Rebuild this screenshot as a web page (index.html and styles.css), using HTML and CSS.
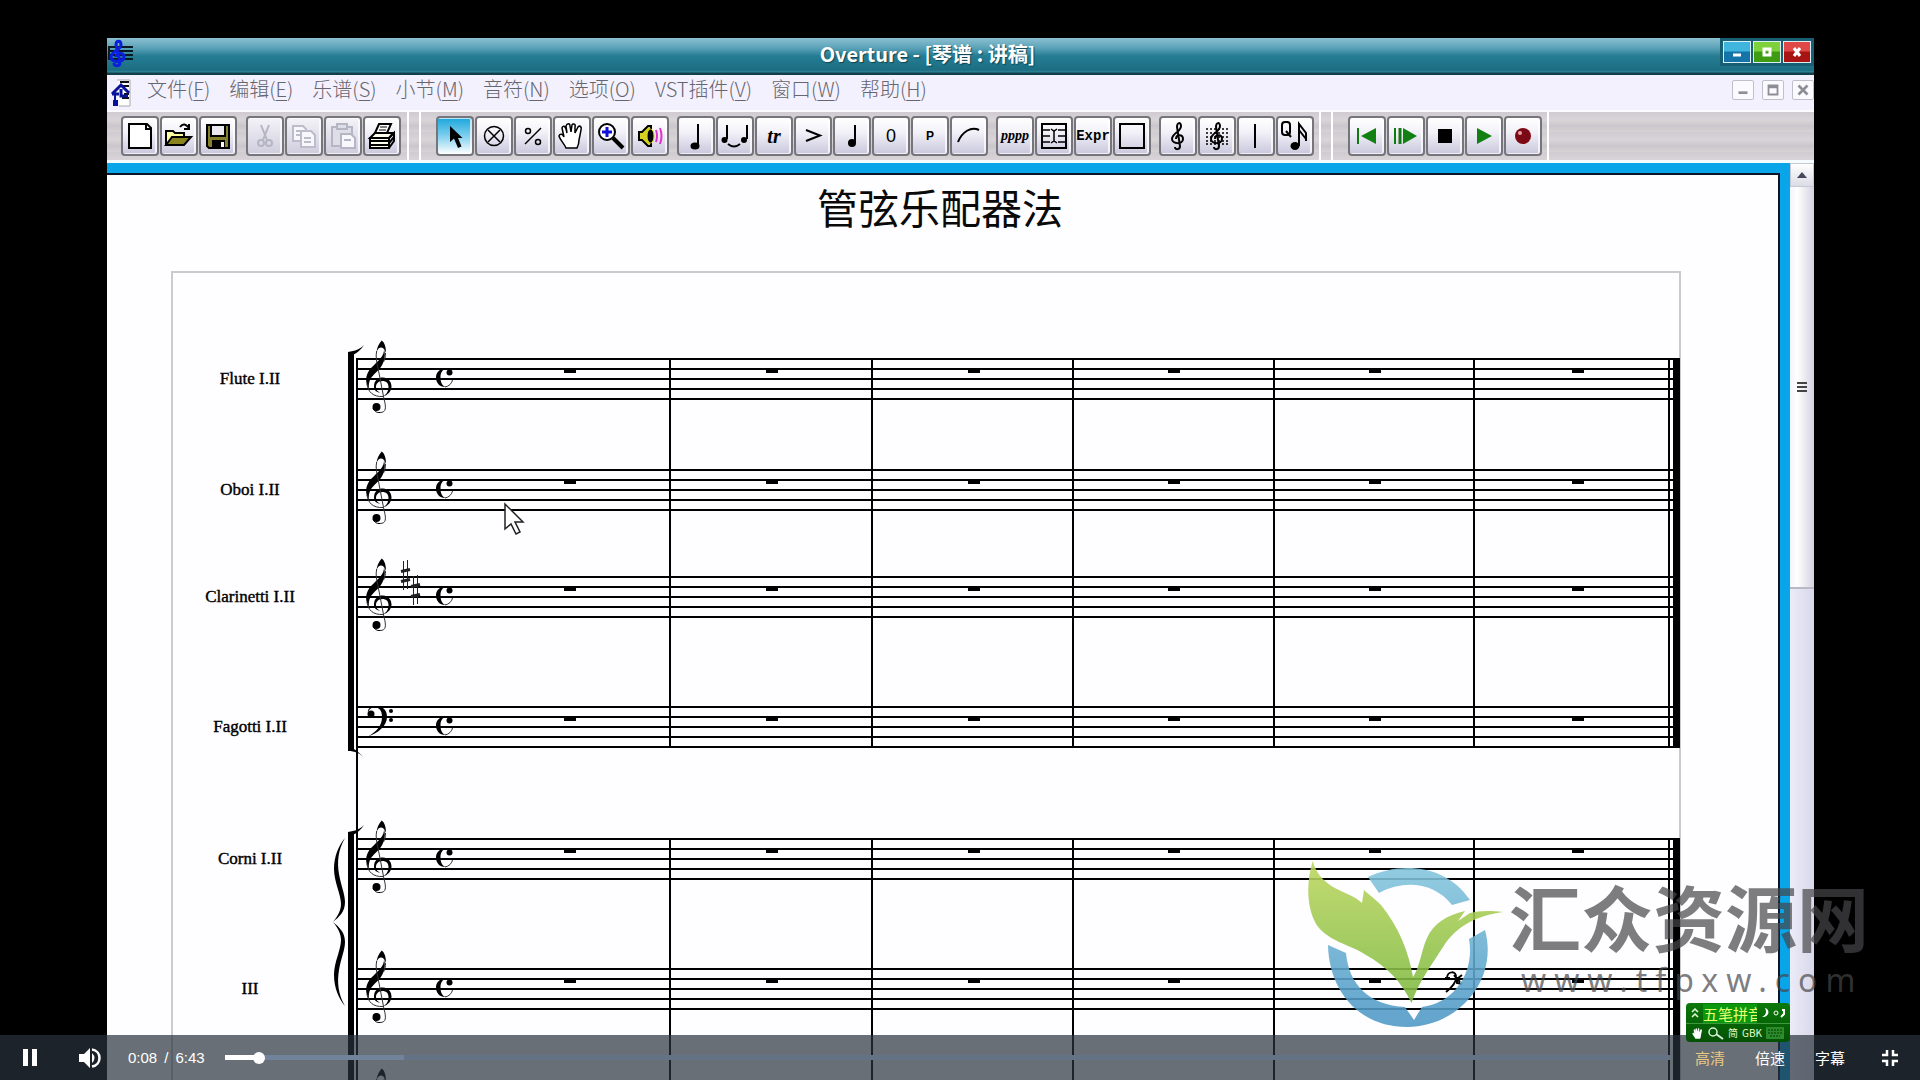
FILE: index.html
```
<!DOCTYPE html>
<html lang="zh-CN">
<head>
    <meta charset="UTF-8">
    <meta name="viewport" content="width=device-width, initial-scale=1.0">
    <title>Overture - [琴谱 : 讲稿]</title>
    <link rel="stylesheet" href="styles.css">
</head>
<body>
    <!-- shared shapes -->
    <svg class="defs" width="0" height="0" aria-hidden="true">
        <defs>
            <g id="treble">
                <path d="M27 -9C29.500 0 26 8 20 13.500C14 19 11 23 12 31C8 25 7.500 17 14.500 9.500C21 3 27.500 -2 27 -9Z"/>
                <path d="M24.700 -17.500C21.500 -14 20 -10 19.500 -6C22 -12 26.500 -12 29 -5C29 -12 27 -16 24.700 -17.500Z"/>
                <path d="M17 29C17 22 21 19.500 26 19.500C31 19.500 34.500 23.500 34.500 28.500C34.500 33 31 37 26 38.500C30 36 31.500 33 31.500 29C31.500 25 29 23 25.500 23C21 23 19 26 19 29C19 32 21 34 23 34.500C19.500 34.500 17 32 17 29Z"/>
                <path d="M28.500 -5C28.500 -1 28 1 26.500 4M19.700 -7C18.500 -2 19.500 4 21 10L27 41C29.500 50 29 54.500 23 54.500M10 26C11 34 16 39 26 38.500" fill="none" stroke="#333"/>
                <circle cx="19.500" cy="49" r="4"/>
                <path d="M16 50C17 53 20 55 23 54.500" fill="none" stroke="#000"/>
            </g>
            <g id="bass">
                <circle cx="14" cy="8" r="3.500"/>
                <path d="M11 7C10 2 15 0 19 0C26 0 30 4 30 11C30 20 21 27 11 30.500C19 26 25 20 25 11C25 4 22 1.500 18 1.500C14 1.500 12 3 11 7Z"/>
                <circle cx="34" cy="5" r="2"/><circle cx="34" cy="14" r="2"/>
            </g>
            <g id="common">
                <path d="M90 10.500C82 10 79 15 79 19.500C79 25 83 29.500 89 29C85 28 83.500 24 83.500 19.500C83.500 15 85 11.500 90 10.500Z"/>
                <path d="M88 29C92 28.500 95 25 95.500 22" fill="none" stroke="#333"/>
                <circle cx="92.500" cy="14.500" r="3"/>
            </g>
            <g id="sharp" stroke="#222">
                <path d="M2.500 0V29M6.500 -1V28" stroke-width="1"/>
                <path d="M0 10.500L9 8.500M0 20.500L9 18.500" stroke-width="3"/>
            </g>
            <g id="gclef" fill="none" stroke="#000" stroke-width="2">
                <path d="M12 26C12 29 17 29 17 25L14 6C14 1 18 1 18 5C18 11 9 12 9 18C9 23 20 24 20 18C20 13 13 13 13 18"/>
            </g>
            <path id="hand" d="M9 27C7 22 3 19 2 15C3 12 6 13 7 16L5 7C6 4 8 5 9 8L10 12L9 5C10 2 13 2 13 5L14 11L15 4C16 2 19 3 18 6L18 12L21 6C23 4 25 6 24 9L22 19C22 23 21 25 20 27Z"/>
        </defs>
    </svg>

    <main class="window">
        <header class="titlebar">
            <svg class="app-icon" viewBox="0 0 28 28" width="28" height="28">
                <path d="M1 8H26M1 12H26M1 16H26M1 20H26M2 7V21" stroke="#0a1a22" stroke-width="2"/>
                <path d="M7 24C7 28 13 28 13 23L9 6C9 1 14 1 14 6C14 11 4 12 4 18C4 24 17 24 17 18C17 13 9 13 9 18" fill="none" stroke="#0a1ee0" stroke-width="3"/>
            </svg>
            <h1 class="caption">Overture - [琴谱 : 讲稿]</h1>
            <div class="caption-buttons">
                <button class="cap min" aria-label="最小化"><svg viewBox="0 0 28 22" width="28" height="22"><path d="M10 14H18" stroke="#fff" stroke-width="3"/></svg></button>
                <button class="cap max" aria-label="最大化"><svg viewBox="0 0 28 22" width="28" height="22"><rect x="11" y="8" width="6" height="6" fill="none" stroke="#fff" stroke-width="3"/></svg></button>
                <button class="cap close" aria-label="关闭"><svg viewBox="0 0 28 22" width="28" height="22"><path d="M11 7L17 15M17 7L11 15" stroke="#fff" stroke-width="3"/></svg></button>
            </div>
        </header>

        <nav class="menubar">
            <svg class="doc-icon" viewBox="0 0 22 28" width="22" height="28">
                <path d="M7 1H20V27H9" fill="#fff" stroke="#aaa"/>
                <path d="M10 3H19M12 7H19M14 15H19M12 19H19" stroke="#111" stroke-width="2"/>
                <path d="M2 15L11 6L19 14M2 15H9M11 10V17H18" fill="none" stroke="#0a1299" stroke-width="3"/>
                <path d="M5 16V22" stroke="#0a1299" stroke-width="2"/>
                <rect x="3" y="21" width="5" height="6" fill="#0a1299"/>
            </svg>
            <button class="menu">文件(<u>F</u>)</button>
            <button class="menu">编辑(<u>E</u>)</button>
            <button class="menu">乐谱(<u>S</u>)</button>
            <button class="menu">小节(<u>M</u>)</button>
            <button class="menu">音符(<u>N</u>)</button>
            <button class="menu">选项(<u>O</u>)</button>
            <button class="menu">VST插件(<u>V</u>)</button>
            <button class="menu">窗口(<u>W</u>)</button>
            <button class="menu">帮助(<u>H</u>)</button>
            <div class="mdi-buttons">
                <button class="mdi" aria-label="最小化文档"><svg viewBox="0 0 20 20" width="20" height="18"><path d="M5 13H15" stroke="#8d8d96" stroke-width="3"/></svg></button>
                <button class="mdi" aria-label="还原文档"><svg viewBox="0 0 20 20" width="20" height="18"><path d="M5 5H15V15H5Z M5 7H15" fill="none" stroke="#8d8d96" stroke-width="2"/></svg></button>
                <button class="mdi" aria-label="关闭文档"><svg viewBox="0 0 20 20" width="20" height="18"><path d="M5 5L15 15M15 5L5 15" stroke="#8d8d96" stroke-width="3"/></svg></button>
            </div>
        </nav>

        <div class="toolbar">
            <div class="band band-file">
                <div class="group">
                    <button class="tool" aria-label="新建"><svg class="icon" viewBox="0 0 30 30"><path d="M4 3H22L26 7V27H4Z" fill="#fff" stroke="#000" stroke-width="2"/><path d="M21 3V8H26" fill="none" stroke="#000" stroke-width="2"/></svg></button>
                    <button class="tool" aria-label="打开"><svg class="icon" viewBox="0 0 30 30"><path d="M2 24V10H9L11 12H20V16" fill="#ffffa0" stroke="#000" stroke-width="2"/><path d="M2 24L8 16H27L20 24Z" fill="#8a8420" stroke="#000" stroke-width="2"/><path d="M16 6C19 2 22 3 25 7M25 3V8H20" fill="none" stroke="#000" stroke-width="2"/></svg></button>
                    <button class="tool" aria-label="保存"><svg class="icon" viewBox="0 0 30 30"><path d="M4 4H26V27H6L4 25Z" fill="#84802c" stroke="#000" stroke-width="2"/><rect x="8" y="4" width="14" height="11" fill="#e9e9ef" stroke="#000" stroke-width="2"/><rect x="9" y="19" width="13" height="8"/><rect x="18" y="21" width="3" height="5" fill="#fff"/></svg></button>
                </div>
                <div class="group">
                    <button class="tool off" aria-label="剪切" disabled><svg class="icon" viewBox="0 0 30 30" fill="none" stroke="#b5b5c4" stroke-width="2"><path d="M11 4L17 19M19 4L13 19"/><circle cx="11" cy="22" r="3"/><circle cx="19" cy="22" r="3"/></svg></button>
                    <button class="tool off" aria-label="复制" disabled><svg class="icon" viewBox="0 0 30 30" fill="#f8f8fc" stroke="#bcbccb" stroke-width="2"><path d="M4 5H14L17 8V20H4ZM7 10H13M7 14H13"/><path d="M12 10H22L26 14V26H12ZM15 17H22M15 21H22"/></svg></button>
                    <button class="tool off" aria-label="粘贴" disabled><svg class="icon" viewBox="0 0 30 30" fill="#dedee8" stroke="#b5b5c4" stroke-width="2"><path d="M4 6H24V25H4Z"/><path d="M9 3H19V8H9Z"/><path d="M13 13H23L27 17V27H13ZM16 19H23" fill="#f8f8fc"/></svg></button>
                    <button class="tool" aria-label="打印"><svg class="icon" viewBox="0 0 30 30"><path d="M8 12L12 3H24L20 12Z" fill="#fff" stroke="#000" stroke-width="2"/><path d="M13 6H20M12 9H19" stroke="#000"/><path d="M3 17L8 12H26L22 17ZM3 17H22V27H3Z" fill="#fffff0" stroke="#000" stroke-width="2"/><path d="M22 17L27 12V20L22 27M3 20H22M3 24H22M22 22L27 16" fill="none" stroke="#000" stroke-width="2"/></svg></button>
                </div>
            </div>
            <div class="band band-edit">
                <div class="group">
                    <button class="tool active" aria-label="选择"><svg class="icon" viewBox="0 0 30 30"><path d="M10 5V21L14 17.500L18 27L21.500 25.500L18 17H22.500Z"/></svg></button>
                    <button class="tool" aria-label="橡皮"><svg class="icon" viewBox="0 0 30 30" fill="none" stroke="#000" stroke-width="1.500"><circle cx="15" cy="15" r="9.500"/><path d="M9 9L21 21M21 9L9 21"/></svg></button>
                    <button class="tool" aria-label="重复小节"><svg class="icon" viewBox="0 0 30 30" fill="none" stroke="#000" stroke-width="1.500"><circle cx="10" cy="10" r="2.500"/><circle cx="20" cy="21" r="2.500"/><path d="M23 7L7 23"/></svg></button>
                    <button class="tool" aria-label="抓手"><svg class="icon" viewBox="0 0 30 30"><use href="#hand" fill="#fff" stroke="#000" stroke-width="1.500"/></svg></button>
                    <button class="tool" aria-label="放大"><svg class="icon" viewBox="0 0 30 30"><path d="M17 17L27 27" stroke="#000" stroke-width="4"/><circle cx="11" cy="11" r="8" fill="#fff" stroke="#000" stroke-width="2"/><path d="M11 6V16M6 11H16" stroke="#1010d8" stroke-width="3"/></svg></button>
                    <button class="tool" aria-label="播放声音"><svg class="icon" viewBox="0 0 30 30"><path d="M4 11H7L13 5H16V25H13L7 19H4Z" fill="#d8d020" stroke="#000" stroke-width="2"/><ellipse cx="15.500" cy="15" rx="3.500" ry="7" stroke="#d8d020"/><path d="M21 9Q23 15 21 21M25 7Q28 15 25 23" fill="none" stroke="#e030d0" stroke-width="2"/></svg></button>
                </div>
                <div class="group">
                    <button class="tool" aria-label="音符"><svg class="icon" viewBox="0 0 30 30"><path d="M17 3V24" stroke="#000" stroke-width="2"/><ellipse cx="14" cy="25" rx="4.500" ry="3.500"/></svg></button>
                    <button class="tool" aria-label="连音"><svg class="icon" viewBox="0 0 30 30"><path d="M7 4V18M27 4V18" stroke="#000" stroke-width="2"/><circle cx="4.500" cy="19" r="3"/><circle cx="24" cy="19" r="3"/><path d="M8 23Q14 28 20 23" fill="none" stroke="#000" stroke-width="2"/></svg></button>
                    <button class="tool glyph-tr" aria-label="颤音">tr</button>
                    <button class="tool" aria-label="重音"><svg class="icon" viewBox="0 0 30 30"><path d="M8 9L22 14.500L8 20" fill="none" stroke="#000" stroke-width="2"/></svg></button>
                    <button class="tool" aria-label="符头"><svg class="icon" viewBox="0 0 30 30"><path d="M18 4V22" stroke="#000" stroke-width="2"/><circle cx="15" cy="22" r="4"/></svg></button>
                    <button class="tool glyph-o" aria-label="全音符">0</button>
                    <button class="tool glyph-p" aria-label="踏板">P</button>
                    <button class="tool" aria-label="连线"><svg class="icon" viewBox="0 0 30 30"><path d="M4 21C8 11 17 5 25 9" fill="none" stroke="#000" stroke-width="2"/></svg></button>
                </div>
                <div class="group">
                    <button class="tool glyph-pppp" aria-label="力度">pppp</button>
                    <button class="tool" aria-label="谱表"><svg class="icon" viewBox="0 0 30 30" fill="none" stroke="#000" stroke-width="2"><path d="M3 3H27V27H3Z"/><path d="M3 9H11M19 9H27M3 15H11M19 15H27M3 21H11M19 21H27M12 8L15 10L18 8M15 10V20M12 22L15 20L18 22" stroke-width="1.500"/></svg></button>
                    <button class="tool glyph-expr" aria-label="表情">Expr</button>
                    <button class="tool" aria-label="框"><svg class="icon" viewBox="0 0 30 30"><path d="M3 3H27V27H3Z" fill="none" stroke="#000" stroke-width="2"/></svg></button>
                </div>
                <div class="group">
                    <button class="tool" aria-label="谱号"><svg class="icon" viewBox="0 0 30 30"><use href="#gclef"/></svg></button>
                    <button class="tool" aria-label="调号"><svg class="icon" viewBox="0 0 30 30"><path d="M4 8H27M4 12H27M4 16H27M4 20H27M4 23H27" stroke="#000" stroke-dasharray="2 2" stroke-width="1.500"/><use href="#gclef"/></svg></button>
                    <button class="tool" aria-label="小节线"><svg class="icon" viewBox="0 0 30 30"><path d="M14 3V27" stroke="#000" stroke-width="2"/></svg></button>
                    <button class="tool" aria-label="量化"><svg class="icon" viewBox="0 0 30 30"><rect x="2" y="1" width="8" height="13" rx="3" fill="none" stroke="#000" stroke-width="2"/><path d="M6 10L11 16M19 25V3L26 12V20M19 9L26 18" fill="none" stroke="#000" stroke-width="2"/><ellipse cx="15" cy="25" rx="4.500" ry="4"/></svg></button>
                </div>
            </div>
            <div class="band band-play">
                <div class="group">
                    <button class="tool" aria-label="回到开头"><svg class="icon" viewBox="0 0 30 30"><path d="M6 7V23" stroke="#107a10" stroke-width="2"/><path d="M24 7V23L9 15Z" fill="#128012"/></svg></button>
                    <button class="tool" aria-label="从头播放"><svg class="icon" viewBox="0 0 30 30"><path d="M4 7V23" stroke="#107a10" stroke-width="2"/><path d="M9 7V23" stroke="#107a10" stroke-width="3"/><path d="M12 7V23L26 15Z" fill="#128012"/></svg></button>
                    <button class="tool" aria-label="停止"><svg class="icon" viewBox="0 0 30 30"><rect x="8" y="8" width="14" height="14"/></svg></button>
                    <button class="tool" aria-label="播放"><svg class="icon" viewBox="0 0 30 30"><path d="M8 7V23L23 15Z" fill="#128012"/></svg></button>
                    <button class="tool" aria-label="录音"><svg class="icon" viewBox="0 0 30 30"><circle cx="15" cy="15" r="8" fill="#7c0a14"/><circle cx="12" cy="12" r="2" fill="#e8a0a8"/></svg></button>
                </div>
            </div>
        </div>

        <div class="workspace">
            <article class="page">
                <h2 class="page-title">管弦乐配器法</h2>
                <div class="frame">
                    <section class="system woodwinds">
                        <div class="bracket"></div>
                        <svg class="hook hook-top" viewBox="0 0 16 10" width="16" height="10"><path d="M0 7C7 6 12 4 16 0C13 5 8 9 4 10H0Z"/></svg>
                        <svg class="hook hook-bottom" viewBox="0 0 16 10" width="16" height="10"><path d="M0 3C7 3 12 5 16 10C13 6 8 2 4 0H0Z"/></svg>
                        <div class="part part-1">
                            <span class="name">Flute I.II</span>
                            <div class="staff measures">
                                <div class="first"><svg class="signature" viewBox="0 0 112 42"><use href="#treble"/><use href="#common"/></svg><i class="rest"></i></div>
                                <i class="rest"></i><i class="rest"></i><i class="rest"></i><i class="rest"></i><i class="rest"></i>
                            </div>
                        </div>
                        <div class="part part-2">
                            <span class="name">Oboi I.II</span>
                            <div class="staff measures">
                                <div class="first"><svg class="signature" viewBox="0 0 112 42"><use href="#treble"/><use href="#common"/></svg><i class="rest"></i></div>
                                <i class="rest"></i><i class="rest"></i><i class="rest"></i><i class="rest"></i><i class="rest"></i>
                            </div>
                        </div>
                        <div class="part part-3">
                            <span class="name">Clarinetti I.II</span>
                            <div class="staff measures">
                                <div class="first"><svg class="signature" viewBox="0 0 112 42"><use href="#treble"/><use href="#sharp" x="44" y="-15"/><use href="#sharp" x="54" y="0"/><use href="#common"/></svg><i class="rest"></i></div>
                                <i class="rest"></i><i class="rest"></i><i class="rest"></i><i class="rest"></i><i class="rest"></i>
                            </div>
                        </div>
                        <div class="part">
                            <span class="name">Fagotti I.II</span>
                            <div class="staff measures">
                                <div class="first"><svg class="signature" viewBox="0 0 112 42"><use href="#bass"/><use href="#common"/></svg><i class="rest"></i></div>
                                <i class="rest"></i><i class="rest"></i><i class="rest"></i><i class="rest"></i><i class="rest"></i>
                            </div>
                        </div>
                        <div class="barlines measures"><i></i><i></i><i></i><i></i><i></i><i class="final"></i></div>
                        <svg class="pointer" viewBox="0 0 22 34" width="22" height="34"><path d="M2 2V27L8 22L13 32L17 30L12 20H20Z" fill="#fff" stroke="#222" stroke-width="1.500"/></svg>
                    </section>

                    <section class="system brass">
                        <div class="bracket"></div>
                        <svg class="hook hook-top" viewBox="0 0 16 10" width="16" height="10"><path d="M0 7C7 6 12 4 16 0C13 5 8 9 4 10H0Z"/></svg>
                        <svg class="brace" viewBox="0 0 14 168" width="14" height="168"><path d="M12 0C5 12 4 24 6 36C8 48 12 56 12 64C12 74 6 79 0 84C6 89 12 94 12 104C12 112 8 120 6 132C4 144 5 156 12 168C6 161 1 150 1 137C1 124 8 112 8 102C8 96 5 90 0 84C5 78 8 72 8 66C8 56 1 44 1 31C1 18 6 7 12 0Z"/></svg>
                        <div class="part part-4">
                            <span class="name">Corni I.II</span>
                            <div class="staff measures">
                                <div class="first"><svg class="signature" viewBox="0 0 112 42"><use href="#treble"/><use href="#common"/></svg><i class="rest"></i></div>
                                <i class="rest"></i><i class="rest"></i><i class="rest"></i><i class="rest"></i><i class="rest"></i>
                            </div>
                        </div>
                        <div class="part part-5">
                            <span class="name">III</span>
                            <div class="staff measures">
                                <div class="first"><svg class="signature" viewBox="0 0 112 42"><use href="#treble"/><use href="#common"/></svg><i class="rest"></i></div>
                                <i class="rest"></i><i class="rest"></i><i class="rest"></i><i class="rest"></i><i class="rest"></i>
                            </div>
                        </div>
                        <div class="part">
                            <span class="name"></span>
                            <div class="staff measures">
                                <div class="first"><svg class="signature" viewBox="0 0 112 42"><use href="#treble"/><use href="#common"/></svg><i class="rest"></i></div>
                            </div>
                        </div>
                        <div class="barlines measures"><i></i><i></i><i></i><i></i><i></i><i class="final"></i></div>
                        <svg class="clef-cursor" viewBox="0 0 20 24" width="20" height="24"><path d="M1 8H6M3 8C3 1 13 0 12 8C12 13 7 18 2 22M10 5L16 12M18 5L13 9V13L18 14" fill="none" stroke="#000" stroke-width="2"/></svg>
                    </section>
                </div>
            </article>
            <div class="scrollbar">
                <button class="scroll-up" aria-label="向上滚动"><svg viewBox="0 0 10 6" width="10" height="6"><path d="M0 6L5 0L10 6Z" fill="#444a5c"/></svg></button>
                <div class="scroll-thumb"><svg viewBox="0 0 10 10" width="10" height="10"><path d="M0 1H10M0 5H10M0 9H10" stroke="#444" stroke-width="2"/></svg></div>
            </div>
        </div>
    </main>

    <aside class="watermark">
        <svg viewBox="0 0 197 167" width="197" height="167">
            <defs>
                <linearGradient id="leaf" x1="0" y1="0" x2="0" y2="1"><stop offset="0" stop-color="#bcd75e"/><stop offset="1" stop-color="#7cb93f"/></linearGradient>
                <linearGradient id="ring" gradientUnits="userSpaceOnUse" x1="0" y1="0" x2="0" y2="166"><stop offset="0" stop-color="#86c8de"/><stop offset="1" stop-color="#4d97c6"/></linearGradient>
            </defs>
            <g opacity="0.880">
                <path d="M61 16C92 1 138 2 163 39L145 44C128 22 98 18 72 32Z" fill="url(#ring)"/>
                <path d="M21 84C22 130 52 166 100 166C150 166 192 120 178 69L162 78C168 112 147 142 115 146L107 159L98 146C62 144 42 124 39 92Z" fill="url(#ring)"/>
                <path d="M5.700 0C-1 22 0 45 8 61C18 80 45 84 59 94C80 106 94 120 104.500 142C112 120 126 102 136 86C150 64 170 55 196 51C182 49 170 50 163 52L151 60L158 50C140 54 126 63 120 77C114 90 113 106 106 116C102 92 92 66 74 44C66 36 60 32 57 29L55 42C44 30 14 30 5.700 0Z" fill="url(#leaf)"/>
            </g>
        </svg>
        <div class="watermark-text">
            <strong>汇众资源网</strong>
            <span>www.tfpxw.com</span>
        </div>
    </aside>

    <div class="ime">
        <div class="ime-row">
            <svg viewBox="0 0 8 12" width="8" height="12" fill="none" stroke="#e8ffe0" stroke-width="1.500"><path d="M1 5L4 2L7 5M1 10L4 7L7 10"/></svg>
            <span class="ime-name">五笔拼音</span>
            <svg viewBox="0 0 8 10" width="8" height="10"><path d="M4 0C9 1 9 9 1 9C5 7 6 4 4 0Z" fill="#fff"/></svg>
            <svg viewBox="0 0 12 10" width="12" height="10"><circle cx="3" cy="5" r="2" fill="none" stroke="#fff"/><path d="M9 2H11V6L8 9" fill="none" stroke="#fff" stroke-width="2"/></svg>
        </div>
        <div class="ime-row">
            <svg viewBox="0 0 28 30" width="13" height="13"><use href="#hand" fill="#fff"/></svg>
            <svg viewBox="0 0 16 13" width="16" height="13"><circle cx="5" cy="5" r="4" fill="none" stroke="#d8f0d8" stroke-width="1.500"/><path d="M8 7L15 12" stroke="#d8f0d8" stroke-width="2"/></svg>
            <span class="ime-small">简</span>
            <span class="ime-small">GBK</span>
            <svg viewBox="0 0 18 12" width="18" height="12"><rect x="0" y="0" width="18" height="12" fill="#2d8a2d"/><path d="M2 3H16M2 6H16M4 9H14" stroke="#0b5a0b" stroke-dasharray="2 1" stroke-width="1.500"/></svg>
        </div>
    </div>

    <footer class="player">
        <button class="ctl pause" aria-label="暂停"><svg viewBox="0 0 14 17" width="14" height="17"><path d="M0 0H5V17H0ZM9 0H14V17H9Z" fill="#fff"/></svg></button>
        <button class="ctl volume" aria-label="音量"><svg viewBox="0 0 22 20" width="22" height="20"><path d="M0 6H5L11 0V20L5 14H0Z" fill="#fff"/><path d="M13 5Q18 10 13 15Z" fill="#fff"/><path d="M13 1.500C23 3 23 17 13 18.500" fill="none" stroke="#fff" stroke-width="2.500"/></svg></button>
        <div class="time"><span>0:08</span><span>/</span><span>6:43</span></div>
        <input class="progress" type="range" min="0" max="403" value="8" aria-label="播放进度">
        <div class="options">
            <button class="ctl quality">高清</button>
            <button class="ctl">倍速</button>
            <button class="ctl">字幕</button>
        </div>
        <button class="ctl" aria-label="退出全屏"><svg viewBox="0 0 16 16" width="16" height="16"><path d="M0 5H5V0M11 0V5H16M16 11H11V16M5 16V11H0" fill="none" stroke="#fff" stroke-width="2.500"/></svg></button>
    </footer>
</body>
</html>
```
FILE: styles.css
```
* {
    box-sizing: border-box;
}
body {
    margin: 0;
    height: 100vh;
    overflow: hidden;
    background: #000;
    font-family: "Noto Sans CJK SC", "Noto Sans", sans-serif;
}
button {
    margin: 0;
    padding: 0;
    border: 0;
    background: none;
    font: inherit;
    color: inherit;
    cursor: pointer;
}
svg {
    display: block;
    flex: none;
}
.defs {
    position: absolute;
}

/* application window */
.window {
    display: flex;
    flex-direction: column;
    height: 100vh;
    padding: 38px 106px 0 107px;
}
.titlebar {
    display: flex;
    align-items: flex-start;
    height: 37px;
    background: linear-gradient(#8cc0d2 0, #5aa2b8 10px, #257d93 18px, #1b6e82 32px, #2f8597 34px, #123f4c 35px);
}
.app-icon {
    margin-top: 1px;
}
.caption {
    flex: 1;
    margin: 0;
    text-align: center;
    font-size: 20px;
    line-height: 32px;
    font-weight: bold;
    color: #fff;
    text-shadow: 1px 1px 1px #0e4452;
}
.caption-buttons {
    display: flex;
    gap: 2px;
    padding: 3px;
    background: #185f74;
}
.cap {
    border: 1px solid #d7eef5;
    overflow: hidden;
}
.cap svg {
    margin: -1px;
}
.cap.min {
    background: linear-gradient(#3fb4dc 45%, #1474a8 50%);
}
.cap.max {
    background: linear-gradient(#7fd13c 45%, #3f9c12 50%);
}
.cap.close {
    background: linear-gradient(#e04848 45%, #a81414 50%);
}
.menubar {
    display: flex;
    align-items: center;
    gap: 19px;
    height: 35px;
    background: #f4f1fe;
    color: #666670;
    font-size: 20px;
    line-height: 28px;
    font-weight: 300;
}
.doc-icon {
    margin: 0 -4px 0 3px;
}
.menu {
    padding-bottom: 8px;
    white-space: nowrap;
}
.menu u {
    text-decoration-thickness: 1px;
    text-underline-offset: 3px;
}
.mdi-buttons {
    display: flex;
    gap: 8px;
    margin-left: auto;
    padding-bottom: 6px;
}
.mdi {
    border: 1px solid #c0c0cc;
    border-radius: 2px;
    background: #fbfbff;
}

/* toolbar */
.toolbar {
    display: flex;
    height: 53px;
    border-top: 2px solid #fcfbff;
    border-bottom: 3px solid #f6fbff;
    background: repeating-linear-gradient(#cfcbd0 0, #d8d4d8 8px, #cac6cb 14px, #d6d2d6 20px);
}
.band {
    display: flex;
    align-items: center;
    border-right: 2px solid #fff;
}
.band-file {
    gap: 9px;
    padding: 0 6px 0 14px;
}
.band-edit,
.band-play {
    gap: 8px;
    padding: 0 5px 0 15px;
    margin-left: 10px;
    border-left: 2px solid #fff;
}
.group {
    display: flex;
    gap: 1px;
}
.tool {
    display: flex;
    align-items: center;
    justify-content: center;
    width: 38px;
    height: 40px;
    border: 2px solid #77757c;
    border-radius: 4px;
    background: linear-gradient(#ffffff, #f2f1f8 40%, #c9c7dc);
    box-shadow: inset -1px 0 0 1px #ffffffb0;
    color: #000;
}
.tool.off {
    background: linear-gradient(#f4f3f8, #cfcddd);
}
.tool.active {
    background: linear-gradient(#1ba6dc, #7fd0ee 50%, #fff);
}
.icon {
    width: 30px;
    height: 30px;
}
.glyph-tr {
    font: italic bold 20px "Liberation Serif", serif;
}
.glyph-o {
    font: 18px "Liberation Sans", sans-serif;
}
.glyph-p {
    font: bold 12px "Liberation Sans", sans-serif;
}
.glyph-pppp {
    font: italic bold 14px "Liberation Serif", serif;
}
.glyph-expr {
    font: 14px "Liberation Mono", monospace;
    font-weight: bold;
}

/* document */
.workspace {
    display: flex;
    flex: 1;
    min-height: 0;
    background: #08a5e8;
}
.page {
    flex: 1;
    display: flex;
    flex-direction: column;
    margin: 10px 10px 0 0;
    border: solid #0c1426;
    border-width: 2px 2px 0 0;
    background: #fefdff;
    overflow: hidden;
}
.page-title {
    margin: 0;
    padding: 0 5px 34px 0;
    text-align: center;
    font-size: 41px;
    line-height: 62px;
    font-weight: 400;
    color: #0a0a0a;
}
.frame {
    position: relative;
    flex: none;
    margin: 0 97px 0 64px;
    padding-top: 85px;
    border: 2px solid #cbcacd;
}
.frame::before {
    content: "";
    position: absolute;
    top: 85px;
    bottom: 0;
    left: 183px;
    width: 2px;
    background: #000;
}
.system {
    position: relative;
    margin-right: -1px;
}
.woodwinds {
    margin-bottom: 90px;
}
.part {
    display: grid;
    grid-template-columns: 154px 1fr;
    column-gap: 30px;
    align-items: center;
}
.part-1 {
    margin-bottom: 69px;
}
.part-2 {
    margin-bottom: 65px;
}
.part-3,
.part-4 {
    margin-bottom: 88px;
}
.part-5 {
    margin-bottom: 76px;
}
.name {
    text-align: center;
    font-family: "Liberation Serif", serif;
    font-size: 17px;
    line-height: 20px;
    color: #000;
    -webkit-text-stroke: 0.4px #000;
}
.measures {
    display: grid;
    grid-template-columns: 314fr 203fr 201fr 201fr 201fr 205fr;
}
.staff {
    height: 42px;
    background: repeating-linear-gradient(#000 0 2px, transparent 2px 10px);
}
.first {
    display: flex;
}
.signature {
    width: 112px;
    height: 42px;
    overflow: visible;
}
.rest {
    width: 12px;
    height: 4px;
    margin: 11px auto 0;
    background: #000;
}
.barlines {
    position: absolute;
    top: 0;
    bottom: 0;
    left: 184px;
    right: 0;
}
.barlines i {
    border-right: 2px solid #000;
}
.barlines .final {
    border-right-width: 7px;
    background: linear-gradient(#000, #000) right 3px top 0 / 2px 100% no-repeat;
}
.bracket {
    position: absolute;
    top: -6px;
    bottom: -3px;
    left: 175px;
    width: 6px;
    background: #000;
}
.hook {
    position: absolute;
    left: 175px;
}
.hook-top {
    top: -13px;
}
.hook-bottom {
    bottom: -10px;
}
.brace {
    position: absolute;
    top: 0;
    left: 160px;
}
.pointer {
    position: absolute;
    top: 144px;
    left: 330px;
}
.clef-cursor {
    position: absolute;
    top: 132px;
    right: 216px;
}

/* scrollbar */
.scrollbar {
    display: flex;
    flex-direction: column;
    width: 24px;
    background: linear-gradient(90deg, #ecebf8, #d9d8ea);
}
.scroll-up {
    display: flex;
    align-items: center;
    justify-content: center;
    height: 24px;
    border: 1px solid #c8c8d4;
    background: linear-gradient(#fff, #dcdce6);
}
.scroll-thumb {
    display: flex;
    align-items: center;
    justify-content: center;
    height: 402px;
    border-bottom: 2px solid #b9b9c6;
    background: linear-gradient(90deg, #f4f2fc, #fff 30%, #d3d2e0);
}

/* overlays */
.watermark {
    position: absolute;
    right: 51px;
    bottom: 52px;
    display: flex;
    align-items: flex-start;
    gap: 5px;
    color: rgba(70, 70, 72, 0.7);
}
.watermark-text {
    display: flex;
    flex-direction: column;
    padding-top: 9px;
}
.watermark-text strong {
    font-size: 72px;
    line-height: 90px;
    font-weight: 700;
}
.watermark-text span {
    padding-left: 12px;
    font-family: "Noto Sans", sans-serif;
    font-size: 32px;
    line-height: 40px;
    letter-spacing: 8px;
}
.ime {
    position: absolute;
    z-index: 2;
    right: 130px;
    bottom: 38px;
    width: 104px;
    height: 39px;
    border-radius: 4px;
    background: linear-gradient(#0a7a0a, #045004);
    color: #e6ffd0;
}
.ime-row {
    display: flex;
    align-items: center;
    gap: 4px;
    height: 20px;
    padding: 0 5px;
}
.ime-row + .ime-row {
    height: 19px;
    border-top: 1px solid #3c9a3c;
}
.ime-name {
    width: 54px;
    overflow: hidden;
    white-space: nowrap;
    background: #0c980c;
    color: #e8ff70;
    font-size: 15px;
    line-height: 19px;
}
.ime-small {
    font-size: 10px;
    line-height: 12px;
}

/* video player bar */
.player {
    position: absolute;
    left: 0;
    right: 0;
    bottom: 0;
    display: flex;
    align-items: center;
    height: 45px;
    padding: 0 22px 0 23px;
    background: rgba(41, 50, 60, 0.7);
    color: #fff;
    font-size: 15px;
    line-height: 20px;
}
.pause {
    margin-right: 42px;
}
.volume {
    margin-right: 27px;
}
.time {
    display: flex;
    gap: 7px;
    font-family: "Liberation Sans", sans-serif;
}
.progress {
    flex: 1;
    appearance: none;
    height: 12px;
    margin: 0 25px 0 20px;
    background: linear-gradient(90deg, #fff 2%, #71839b 2%, #71839b 12.4%, #637285 12.4%) center / 100% 5px no-repeat;
}
.progress::-webkit-slider-thumb {
    appearance: none;
    width: 12px;
    height: 12px;
    border-radius: 50%;
    background: #fff;
}
.options {
    display: flex;
    gap: 30px;
    margin-right: 37px;
}
.quality {
    color: #e9c982;
}
```
